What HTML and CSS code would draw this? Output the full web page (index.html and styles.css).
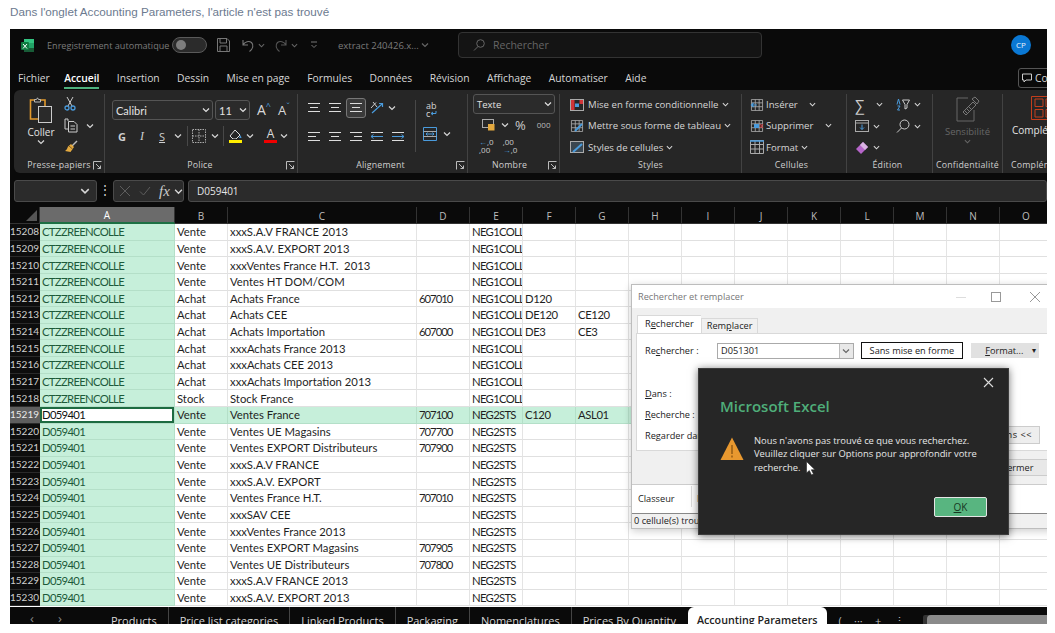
FILE: index.html
```html
<!DOCTYPE html>
<html lang="fr">
<head>
    <meta charset="UTF-8">
    <title>Accounting Parameters</title>
    <link rel="stylesheet" href="styles.css">
</head>
<body>
    <svg class="sprite" width="0" height="0">
        <symbol id="chev" viewBox="0 0 8 8"><path d="M1 2.5 4 5.5 7 2.5" fill="none" stroke="currentColor" stroke-width="1.2"/></symbol>
        <symbol id="launcher" viewBox="0 0 9 9"><path d="M.5 8.5V.5H8.5M3 3 7.5 7.5M7.5 4.5V7.5H4.5" fill="none" stroke="#bbb" stroke-width="1"/></symbol>
        <symbol id="lines" viewBox="0 0 14 12"><path d="M1 1.5H13M3 5.5H11M1 9.5H13" fill="none" stroke="#ddd" stroke-width="1.1"/></symbol>
        <symbol id="lines-l" viewBox="0 0 14 12"><path d="M1 1.5H13M1 5.5H9M1 9.5H13" fill="none" stroke="#ddd" stroke-width="1.1"/></symbol>
        <symbol id="lines-r" viewBox="0 0 14 12"><path d="M1 1.5H13M5 5.5H13M1 9.5H13" fill="none" stroke="#ddd" stroke-width="1.1"/></symbol>
        <symbol id="tbl" viewBox="0 0 14 14"><path d="M.5.5H13.5V13.5H.5ZM.5 4.5H13.5M.5 9H13.5M5 .5V13.5M9.5.5V13.5" fill="none" stroke="#aaa" stroke-width="1"/></symbol>
    </svg>

    <p class="caption">Dans l'onglet Accounting Parameters, l'article n'est pas trouvé</p>

    <div class="excel">
        <!-- barre de titre -->
        <div class="titlebar">
            <svg class="xl-icon" width="13" height="13" viewBox="0 0 13 13"><rect x="3" width="10" height="13" rx="1" fill="#21a366"/><rect x="3" width="10" height="4" fill="#33c481"/><rect x="3" y="9" width="10" height="4" fill="#185c37"/><rect y="3" width="8" height="8" rx="1" fill="#107c41"/><path d="M2 5 6 9.5M6 5 2 9.5" stroke="#fff" stroke-width="1"/></svg>
            <span class="autosave">Enregistrement automatique</span>
            <span class="toggle"></span>
            <svg class="save" width="13" height="14" viewBox="0 0 13 14"><path d="M.5.5H10L12.5 3V13.5H.5ZM3 .5V5H9.5V.5M3 13.5V8H10V13.5" fill="none" stroke="#777"/></svg>
            <svg class="undo" width="12" height="13" viewBox="0 0 12 13"><path d="M1 1V6H6M1 6C3 2.5 7 1.5 9.5 3.5 12 6 11 10 7.5 12.5" fill="none" stroke="#777" stroke-width="1.1"/></svg>
            <svg class="tb-chev" width="7" height="7"><use href="#chev"/></svg>
            <svg class="redo" width="12" height="13" viewBox="0 0 12 13"><path d="M11 1V6H6M11 6C9 2.5 5 1.5 2.5 3.5 0 6 1 10 4.5 12.5" fill="none" stroke="#555" stroke-width="1.1"/></svg>
            <svg class="tb-chev" width="7" height="7"><use href="#chev"/></svg>
            <svg class="custom" width="8" height="8" viewBox="0 0 8 8"><path d="M1 1H7M1.5 4 4 6.5 6.5 4" fill="none" stroke="#777"/></svg>
            <span class="filename">extract 240426.x...</span>
            <svg class="tb-chev name-chev" width="8" height="8"><use href="#chev"/></svg>
            <div class="search">
                <svg width="12" height="12" viewBox="0 0 12 12"><circle cx="7.5" cy="4.5" r="3.8" fill="none" stroke="#666"/><path d="M5 7.5 1 11.5" stroke="#666"/></svg>
                <span>Rechercher</span>
            </div>
            <span class="avatar">CP</span>
        </div>

        <!-- onglets du ruban -->
        <div class="tabs">
            <span>Fichier</span>
            <span class="on">Accueil</span>
            <span>Insertion</span>
            <span>Dessin</span>
            <span>Mise en page</span>
            <span>Formules</span>
            <span>Données</span>
            <span>Révision</span>
            <span>Affichage</span>
            <span>Automatiser</span>
            <span>Aide</span>
            <div class="comment">
                <svg width="10" height="10" viewBox="0 0 10 10"><path d="M.5 1H9.5V7H4L2 9V7H.5Z" fill="none" stroke="#ccc"/></svg>
                Commentaires
            </div>
        </div>

        <!-- ruban -->
        <div class="ribbon">
            <div class="group g-clip">
                <div class="g-body clip-body">
                    <div class="paste">
                        <svg width="24" height="27" viewBox="0 0 24 27"><path d="M6 3H1.5V22H9" fill="none" stroke="#e39a2d" stroke-width="1.6"/><path d="M11 3H16V9" fill="none" stroke="#e39a2d" stroke-width="1.6"/><path d="M5.5 5V2.5H7.5L8.5 .8 9.5 2.5H11.5V5Z" fill="none" stroke="#bbb"/><rect x="9.5" y="9.5" width="13" height="16" fill="#2a2a2a" stroke="#ccc"/></svg>
                        <span>Coller</span>
                        <svg width="8" height="8"><use href="#chev"/></svg>
                    </div>
                    <div class="clip-tools">
                        <svg width="12" height="15" viewBox="0 0 12 15"><path d="M3 1 8 10M9 1 4 10" stroke="#ccc" fill="none"/><circle cx="3" cy="12" r="2" fill="none" stroke="#4a9bdc" stroke-width="1.3"/><circle cx="9" cy="12" r="2" fill="none" stroke="#4a9bdc" stroke-width="1.3"/></svg>
                        <div class="copy-row">
                            <svg width="14" height="15" viewBox="0 0 14 15"><path d="M4 3V1H1V11H4" fill="none" stroke="#ccc"/><path d="M4.5 3.5H10L13 6.5V14H4.5ZM6.5 8H11M6.5 11H11" fill="none" stroke="#ccc"/></svg>
                            <svg class="copy-chev" width="8" height="8"><use href="#chev"/></svg>
                        </div>
                        <svg width="14" height="14" viewBox="0 0 14 14"><path d="M8 6 13 1" stroke="#bbb" stroke-width="1.5"/><path d="M7 4 10 7 6.5 12 1 11C3 10 3.5 7.5 4 6.5Z" fill="#e3a93f"/><path d="M5 6 8.5 9" stroke="#7a5a20"/></svg>
                    </div>
                </div>
                <div class="g-label">Presse-papiers</div>
                <svg class="launch" width="9" height="9"><use href="#launcher"/></svg>
            </div>

            <div class="group g-font">
                <div class="g-body stack">
                    <div class="f-row r1">
                        <div class="combo font-name"><span>Calibri</span><svg width="8" height="8"><use href="#chev"/></svg></div>
                        <div class="combo font-size"><span>11</span><svg width="8" height="8"><use href="#chev"/></svg></div>
                        <span class="grow-a">A<sup>^</sup></span>
                        <span class="shrink-a">A<sup>ˇ</sup></span>
                    </div>
                    <div class="f-row r2">
                        <b class="g-b">G</b>
                        <i class="g-i">I</i>
                        <u class="g-s">S</u>
                        <svg class="c1" width="8" height="8"><use href="#chev"/></svg>
                        <span class="vsep"></span>
                        <svg width="14" height="14" viewBox="0 0 14 14"><path d="M.5.5H13.5V13.5H.5ZM7 .5V13.5M.5 7H13.5" fill="none" stroke="#aaa" stroke-dasharray="1.5 1"/></svg>
                        <svg class="c2" width="8" height="8"><use href="#chev"/></svg>
                        <span class="vsep"></span>
                        <span class="swatch">
                            <svg width="13" height="10" viewBox="0 0 13 10"><path d="M6 1 11 6 7 10H4L1 7Z" fill="none" stroke="#ddd"/><path d="M11.5 6 12.5 9H10Z" fill="#4a9bdc"/></svg>
                            <em class="yellow"></em>
                        </span>
                        <svg class="c3" width="8" height="8"><use href="#chev"/></svg>
                        <span class="swatch text-a">A<em class="red"></em></span>
                        <svg class="c4" width="8" height="8"><use href="#chev"/></svg>
                    </div>
                </div>
                <div class="g-label">Police</div>
                <svg class="launch" width="9" height="9"><use href="#launcher"/></svg>
            </div>

            <div class="group g-align">
                <div class="g-body align-body">
                    <div class="stack align-left">
                        <div class="a-row a1">
                            <svg width="14" height="12"><use href="#lines"/></svg>
                            <svg width="14" height="12"><use href="#lines"/></svg>
                            <span class="pressed"><svg width="14" height="12"><use href="#lines"/></svg></span>
                            <svg width="14" height="14" viewBox="0 0 14 14"><path d="M2 12 12 3M9 2.5H12.5V6" fill="none" stroke="#4a9bdc" stroke-width="1.2"/><path d="M1 7 6 1.5M3 1 7 6" stroke="#ccc" fill="none"/></svg>
                            <svg class="a-chev" width="8" height="8"><use href="#chev"/></svg>
                        </div>
                        <div class="a-row a2">
                            <svg width="14" height="12"><use href="#lines-l"/></svg>
                            <svg width="14" height="12"><use href="#lines"/></svg>
                            <svg width="14" height="12"><use href="#lines-r"/></svg>
                            <svg width="14" height="12" viewBox="0 0 14 12"><path d="M1 1.5H13M1 9.5H13" stroke="#ddd"/><path d="M6 5.5H13M3.5 3.5 1 5.5 3.5 7.5M1 5.5H6" fill="none" stroke="#4a9bdc"/></svg>
                            <svg width="14" height="12" viewBox="0 0 14 12"><path d="M1 1.5H13M1 9.5H13" stroke="#ddd"/><path d="M1 5.5H13M10.5 3.5 13 5.5 10.5 7.5" fill="none" stroke="#4a9bdc"/></svg>
                        </div>
                    </div>
                    <span class="vsep tall"></span>
                    <div class="stack wrap-col">
                        <div class="wrap-text">ab<br>c<svg width="7" height="7" viewBox="0 0 7 7"><path d="M6 1V3.5H1.5M3 2 1 3.5 3 5" fill="none" stroke="#4a9bdc"/></svg></div>
                        <div class="merge-row">
                            <svg width="14" height="14" viewBox="0 0 14 14"><path d="M.5.5H13.5V13.5H.5Z" fill="none" stroke="#4a9bdc"/><path d="M.5 4.5H13.5M.5 9.5H13.5" stroke="#aaa"/><path d="M3 7H11M4.5 5.5 3 7 4.5 8.5M9.5 5.5 11 7 9.5 8.5" fill="none" stroke="#4a9bdc"/></svg>
                            <svg width="8" height="8"><use href="#chev"/></svg>
                        </div>
                    </div>
                </div>
                <div class="g-label">Alignement</div>
                <svg class="launch" width="9" height="9"><use href="#launcher"/></svg>
            </div>

            <div class="group g-num">
                <div class="g-body stack num-body">
                    <div class="combo num-format"><span>Texte</span><svg width="8" height="8"><use href="#chev"/></svg></div>
                    <div class="n-row">
                        <svg width="13" height="12" viewBox="0 0 13 12"><rect x=".5" y=".5" width="11" height="8" fill="none" stroke="#aaa"/><rect x="6" y="5" width="6.5" height="6.5" fill="#e3a93f"/></svg>
                        <svg class="n-chev" width="8" height="8"><use href="#chev"/></svg>
                        <span class="pct">%</span>
                        <span class="thou">000</span>
                    </div>
                    <div class="n-row dec">
                        <span class="dec-a"><em>←</em>,0<br>,00</span>
                        <span class="dec-b">,00<br><em>→</em>,0</span>
                    </div>
                </div>
                <div class="g-label">Nombre</div>
                <svg class="launch" width="9" height="9"><use href="#launcher"/></svg>
            </div>

            <div class="group g-styles">
                <div class="g-body stack list-body">
                    <div class="li">
                        <svg width="14" height="12" viewBox="0 0 14 12"><rect x=".5" y=".5" width="13" height="11" fill="none" stroke="#aaa"/><rect x="1" y="1" width="3.5" height="10" fill="#d13438"/><rect x="9.5" y="1" width="3.5" height="4" fill="#d13438"/><rect x="5" y="4.5" width="4" height="3.5" fill="#4a9bdc"/></svg>
                        <span>Mise en forme conditionnelle</span><svg width="7" height="7"><use href="#chev"/></svg>
                    </div>
                    <div class="li">
                        <svg width="14" height="12" viewBox="0 0 14 12"><use href="#tbl"/><path d="M5 11 12 4" stroke="#4a9bdc" stroke-width="2"/></svg>
                        <span>Mettre sous forme de tableau</span><svg width="7" height="7"><use href="#chev"/></svg>
                    </div>
                    <div class="li">
                        <svg width="14" height="12" viewBox="0 0 14 12"><rect x=".5" y=".5" width="13" height="11" fill="#3a4650" stroke="#aaa"/><path d="M3 11 12 3" stroke="#4a9bdc" stroke-width="2"/></svg>
                        <span>Styles de cellules</span><svg width="7" height="7"><use href="#chev"/></svg>
                    </div>
                </div>
                <div class="g-label">Styles</div>
            </div>

            <div class="group g-cells">
                <div class="g-body stack list-body">
                    <div class="li">
                        <svg width="14" height="12" viewBox="0 0 14 12"><use href="#tbl"/><path d="M1 6H7M3.5 4 1.5 6 3.5 8" fill="none" stroke="#4a9bdc" stroke-width="1.2"/></svg>
                        <span class="w-ins">Insérer</span><svg width="7" height="7"><use href="#chev"/></svg>
                    </div>
                    <div class="li">
                        <svg width="14" height="12" viewBox="0 0 14 12"><use href="#tbl"/><rect x="4" y="4" width="5" height="4" fill="#4a9bdc"/><path d="M10 4 13 8M13 4 10 8" stroke="#d13438"/></svg>
                        <span class="w-sup">Supprimer</span><svg width="7" height="7"><use href="#chev"/></svg>
                    </div>
                    <div class="li">
                        <svg width="14" height="14" viewBox="0 0 14 14"><use href="#tbl"/><path d="M0 1H14" stroke="#4a9bdc" stroke-width="1.5"/></svg>
                        <span>Format</span><svg width="7" height="7"><use href="#chev"/></svg>
                    </div>
                </div>
                <div class="g-label">Cellules</div>
            </div>

            <div class="group g-edit">
                <div class="g-body edit-body">
                    <span class="sigma">∑</span>
                    <svg class="e-c1" width="7" height="7"><use href="#chev"/></svg>
                    <svg width="14" height="13" viewBox="0 0 14 13"><path d="M1 6.5L2.5 1 4 6.5M1.5 8H4L1.5 12H4" fill="none" stroke="#4a9bdc"/><path d="M6.5 2H13.5L11 6.5V10L9 11V6.5Z" fill="none" stroke="#ccc"/></svg>
                    <svg width="7" height="7"><use href="#chev"/></svg>
                    <svg width="14" height="12" viewBox="0 0 14 12"><rect x=".5" y=".5" width="13" height="11" fill="none" stroke="#aaa"/><path d="M.5 3H13.5" stroke="#aaa"/><path d="M7 4.5V9.5M5 7.5 7 9.5 9 7.5" fill="none" stroke="#4a9bdc"/></svg>
                    <svg width="7" height="7"><use href="#chev"/></svg>
                    <svg width="14" height="14" viewBox="0 0 14 14"><circle cx="8.5" cy="5.5" r="4.5" fill="none" stroke="#ccc"/><path d="M5.5 9 1 13.5" stroke="#ccc"/></svg>
                    <svg width="7" height="7"><use href="#chev"/></svg>
                    <svg width="14" height="14" viewBox="0 0 14 14"><path d="M8 1 13 6 6 13 1 8Z" fill="#b565c9"/><path d="M8 1 13 6 10 9 5 4Z" fill="#d9b3e3"/></svg>
                    <svg width="7" height="7"><use href="#chev"/></svg>
                </div>
                <div class="g-label">Édition</div>
            </div>

            <div class="group g-conf">
                <div class="g-body big-body">
                    <svg width="24" height="26" viewBox="0 0 24 26"><path d="M1 2H12M1 2V25H18V14" fill="none" stroke="#666"/><path d="M7 16 17 6 20 9 10 19Z" fill="none" stroke="#777"/><path d="M16 3 19 1 23 5 21 8Z" fill="none" stroke="#777"/><path d="M9 15 12 18M11 13 14 16M13 11 16 14" stroke="#777"/></svg>
                    <span class="dim">Sensibilité</span>
                    <svg class="dim" width="7" height="7"><use href="#chev"/></svg>
                </div>
                <div class="g-label">Confidentialité</div>
            </div>

            <div class="group g-comp">
                <div class="g-body big-body">
                    <svg width="26" height="24" viewBox="0 0 26 24"><path d="M.5.5H25.5V23.5H.5ZM4 3H12V10.5H4ZM15 3H23V10.5H15ZM4 13.5H12V21H4ZM15 13.5H23V21H15Z" fill="none" stroke="#c43e1c"/></svg>
                    <span>Compléments</span>
                </div>
                <div class="g-label">Compléments</div>
            </div>
        </div>

        <!-- barre de formule -->
        <div class="formula">
            <div class="namebox"><svg width="10" height="10"><use href="#chev"/></svg></div>
            <span class="dots">⋮</span>
            <div class="fx-box">
                <svg width="12" height="12" viewBox="0 0 12 12"><path d="M1 1 11 11M11 1 1 11" stroke="#5d5d5d"/></svg>
                <svg width="12" height="12" viewBox="0 0 12 12"><path d="M1 6.5 4.5 10 11 2" fill="none" stroke="#5d5d5d"/></svg>
                <i>fx</i>
                <svg width="9" height="9"><use href="#chev"/></svg>
            </div>
            <div class="fx-input">D059401</div>
        </div>

        <!-- feuille -->
        <div class="sheet">
            <table>
                <colgroup>
                    <col class="c-head"><col class="c-a"><col class="c-b"><col class="c-c"><col class="c-s"><col class="c-s"><col class="c-s"><col class="c-s">
                    <col class="c-s"><col class="c-s"><col class="c-s"><col class="c-s"><col class="c-s"><col class="c-s"><col class="c-s"><col class="c-s">
                </colgroup>
                <thead>
                    <tr><th class="corner"></th><th class="col-on">A</th><th>B</th><th>C</th><th>D</th><th>E</th><th>F</th><th>G</th><th>H</th><th>I</th><th>J</th><th>K</th><th>L</th><th>M</th><th>N</th><th>O</th></tr>
                </thead>
                <tbody>
                    <tr><th>15208</th><td>CTZZREENCOLLE</td><td>Vente</td><td>xxxS.A.V FRANCE 2013</td><td></td><td>NEG1COLL</td><td></td><td></td><td></td><td></td><td></td><td></td><td></td><td></td><td></td><td></td></tr>
                    <tr><th>15209</th><td>CTZZREENCOLLE</td><td>Vente</td><td>xxxS.A.V. EXPORT 2013</td><td></td><td>NEG1COLL</td><td></td><td></td><td></td><td></td><td></td><td></td><td></td><td></td><td></td><td></td></tr>
                    <tr><th>15210</th><td>CTZZREENCOLLE</td><td>Vente</td><td>xxxVentes France H.T.&nbsp; 2013</td><td></td><td>NEG1COLL</td><td></td><td></td><td></td><td></td><td></td><td></td><td></td><td></td><td></td><td></td></tr>
                    <tr><th>15211</th><td>CTZZREENCOLLE</td><td>Vente</td><td>Ventes HT DOM/COM</td><td></td><td>NEG1COLL</td><td></td><td></td><td></td><td></td><td></td><td></td><td></td><td></td><td></td><td></td></tr>
                    <tr><th>15212</th><td>CTZZREENCOLLE</td><td>Achat</td><td>Achats France</td><td>607010</td><td>NEG1COLL</td><td>D120</td><td></td><td></td><td></td><td></td><td></td><td></td><td></td><td></td><td></td></tr>
                    <tr><th>15213</th><td>CTZZREENCOLLE</td><td>Achat</td><td>Achats CEE</td><td></td><td>NEG1COLL</td><td>DE120</td><td>CE120</td><td></td><td></td><td></td><td></td><td></td><td></td><td></td><td></td></tr>
                    <tr><th>15214</th><td>CTZZREENCOLLE</td><td>Achat</td><td>Achats Importation</td><td>607000</td><td>NEG1COLL</td><td>DE3</td><td>CE3</td><td></td><td></td><td></td><td></td><td></td><td></td><td></td><td></td></tr>
                    <tr><th>15215</th><td>CTZZREENCOLLE</td><td>Achat</td><td>xxxAchats France 2013</td><td></td><td>NEG1COLL</td><td></td><td></td><td></td><td></td><td></td><td></td><td></td><td></td><td></td><td></td></tr>
                    <tr><th>15216</th><td>CTZZREENCOLLE</td><td>Achat</td><td>xxxAchats CEE 2013</td><td></td><td>NEG1COLL</td><td></td><td></td><td></td><td></td><td></td><td></td><td></td><td></td><td></td><td></td></tr>
                    <tr><th>15217</th><td>CTZZREENCOLLE</td><td>Achat</td><td>xxxAchats Importation 2013</td><td></td><td>NEG1COLL</td><td></td><td></td><td></td><td></td><td></td><td></td><td></td><td></td><td></td><td></td></tr>
                    <tr><th>15218</th><td>CTZZREENCOLLE</td><td>Stock</td><td>Stock France</td><td></td><td>NEG1COLL</td><td></td><td></td><td></td><td></td><td></td><td></td><td></td><td></td><td></td><td></td></tr>
                    <tr class="row-on"><th>15219</th><td class="active">D059401</td><td>Vente</td><td>Ventes France</td><td>707100</td><td>NEG2STS</td><td>C120</td><td>ASL01</td><td></td><td></td><td></td><td></td><td></td><td></td><td></td><td></td></tr>
                    <tr><th>15220</th><td>D059401</td><td>Vente</td><td>Ventes UE Magasins</td><td>707700</td><td>NEG2STS</td><td></td><td></td><td></td><td></td><td></td><td></td><td></td><td></td><td></td><td></td></tr>
                    <tr><th>15221</th><td>D059401</td><td>Vente</td><td>Ventes EXPORT Distributeurs</td><td>707900</td><td>NEG2STS</td><td></td><td></td><td></td><td></td><td></td><td></td><td></td><td></td><td></td><td></td></tr>
                    <tr><th>15222</th><td>D059401</td><td>Vente</td><td>xxxS.A.V FRANCE</td><td></td><td>NEG2STS</td><td></td><td></td><td></td><td></td><td></td><td></td><td></td><td></td><td></td><td></td></tr>
                    <tr><th>15223</th><td>D059401</td><td>Vente</td><td>xxxS.A.V. EXPORT</td><td></td><td>NEG2STS</td><td></td><td></td><td></td><td></td><td></td><td></td><td></td><td></td><td></td><td></td></tr>
                    <tr><th>15224</th><td>D059401</td><td>Vente</td><td>Ventes France H.T.</td><td>707010</td><td>NEG2STS</td><td></td><td></td><td></td><td></td><td></td><td></td><td></td><td></td><td></td><td></td></tr>
                    <tr><th>15225</th><td>D059401</td><td>Vente</td><td>xxxSAV CEE</td><td></td><td>NEG2STS</td><td></td><td></td><td></td><td></td><td></td><td></td><td></td><td></td><td></td><td></td></tr>
                    <tr><th>15226</th><td>D059401</td><td>Vente</td><td>xxxVentes France 2013</td><td></td><td>NEG2STS</td><td></td><td></td><td></td><td></td><td></td><td></td><td></td><td></td><td></td><td></td></tr>
                    <tr><th>15227</th><td>D059401</td><td>Vente</td><td>Ventes EXPORT Magasins</td><td>707905</td><td>NEG2STS</td><td></td><td></td><td></td><td></td><td></td><td></td><td></td><td></td><td></td><td></td></tr>
                    <tr><th>15228</th><td>D059401</td><td>Vente</td><td>Ventes UE Distributeurs</td><td>707800</td><td>NEG2STS</td><td></td><td></td><td></td><td></td><td></td><td></td><td></td><td></td><td></td><td></td></tr>
                    <tr><th>15229</th><td>D059401</td><td>Vente</td><td>xxxS.A.V FRANCE 2013</td><td></td><td>NEG2STS</td><td></td><td></td><td></td><td></td><td></td><td></td><td></td><td></td><td></td><td></td></tr>
                    <tr><th>15230</th><td>D059401</td><td>Vente</td><td>xxxS.A.V. EXPORT 2013</td><td></td><td>NEG2STS</td><td></td><td></td><td></td><td></td><td></td><td></td><td></td><td></td><td></td><td></td></tr>
                </tbody>
            </table>
        </div>

        <!-- onglets de feuilles -->
        <div class="sheet-tabs">
            <span class="nav">‹</span>
            <span class="nav nav2">›</span>
            <span class="st">Products</span>
            <span class="st">Price list categories</span>
            <span class="st">Linked Products</span>
            <span class="st">Packaging</span>
            <span class="st">Nomenclatures</span>
            <span class="st last">Prices By Quantity</span>
            <span class="st-on">Accounting Parameters</span>
            <span class="st-more"><span>(</span><span>···</span><span>+</span><span>⋮</span></span>
            <span class="hscroll"><em></em></span>
        </div>

        <!-- boite rechercher et remplacer -->
        <div class="find-dialog">
            <div class="fd-title">
                <span>Rechercher et remplacer</span>
                <svg class="fd-min" width="10" height="10" viewBox="0 0 10 10"><path d="M0 5.5H10" stroke="#ddd"/></svg>
                <svg class="fd-max" width="10" height="10" viewBox="0 0 10 10"><rect x=".5" y=".5" width="9" height="9" fill="none" stroke="#999"/></svg>
                <svg class="fd-close" width="10" height="10" viewBox="0 0 10 10"><path d="M0 0 10 10M10 0 0 10" stroke="#999"/></svg>
            </div>
            <div class="fd-tabs">
                <span class="fd-tab on">R<u>e</u>chercher</span>
                <span class="fd-tab">Rem<u>p</u>lacer</span>
            </div>
            <div class="fd-panel">
                <div class="fd-row first">
                    <label>Re<u>c</u>hercher :</label>
                    <div class="fd-input"><span>D051301</span><b><svg width="8" height="8"><use href="#chev"/></svg></b></div>
                    <span class="fd-noformat">Sans mise en forme</span>
                    <span class="fd-format"><span><u>F</u>ormat...</span><small>▾</small></span>
                </div>
                <div class="fd-row dans"><label><u>D</u>ans :</label></div>
                <div class="fd-row"><label><u>R</u>echerche :</label></div>
                <div class="fd-row last"><label>Re<u>g</u>arder dans :</label><span class="fd-options">Options &lt;&lt;</span></div>
            </div>
            <div class="fd-actions"><span class="fd-closebtn">Fermer</span></div>
            <div class="fd-results"><span class="fd-col">Classeur</span><span class="fd-col2">Feuille</span></div>
            <div class="fd-status">0 cellule(s) trouvée(s)</div>
        </div>

        <!-- message d'erreur -->
        <div class="msgbox">
            <svg class="msg-close" width="11" height="11" viewBox="0 0 11 11"><path d="M1 1 10 10M10 1 1 10" stroke="#ddd" stroke-width="1.1"/></svg>
            <h2>Microsoft Excel</h2>
            <div class="msg-body">
                <svg width="24" height="24" viewBox="0 0 24 24"><path d="M12 .5 23.5 23H.5Z" fill="#e8982f"/><path d="M12 8V17M12 18.5V20.5" stroke="#6b3f08" stroke-width="1"/></svg>
                <p>Nous n'avons pas trouvé ce que vous recherchez.<br>Veuillez cliquer sur Options pour approfondir votre<br>recherche.</p>
            </div>
            <div class="msg-actions"><span class="msg-ok"><u>O</u>K</span></div>
            <svg class="pointer" width="10" height="15" viewBox="0 0 10 15"><path d="M.5.5V12L3.3 9.5 5.5 14 7.5 13 5.3 8.8H9Z" fill="#fff" stroke="#222" stroke-width=".6"/></svg>
        </div>
    </div>
</body>
</html>
```

FILE: styles.css
```css
* {
    margin: 0;
    padding: 0;
    box-sizing: border-box;
}

html, body {
    height: 633px;
    overflow: hidden;
    background: #fff;
}

body {
    font-family: "Open Sans", "Noto Sans", sans-serif;
}

svg {
    display: block;
    flex: none;
}

.sprite {
    position: absolute;
}

.caption {
    height: 29px;
    padding: 5px 0 0 10px;
    font: 11.7px/14px "Liberation Sans", Arial, sans-serif;
    color: #6c7a8f;
}

.excel {
    position: relative;
    display: flex;
    flex-direction: column;
    width: 1037px;
    height: 595px;
    margin-left: 10px;
    overflow: hidden;
    background: #0a0a0a;
    color: #d6d6d6;
    font-size: 10px;
}

/* title bar */
.titlebar {
    display: flex;
    align-items: center;
    height: 32px;
    padding-left: 11px;
    color: #7b7b7b;
}

.autosave {
    width: 119px;
    margin-left: 13px;
    font-size: 9.1px;
    white-space: nowrap;
}

.toggle {
    width: 35px;
    height: 16px;
    margin-left: 6px;
    border: 1px solid #5a5a5a;
    border-radius: 8px;
    background: #2b2b2b;
}

.toggle::before {
    content: "";
    display: block;
    width: 10px;
    height: 10px;
    margin: 2px 0 0 3px;
    border-radius: 50%;
    background: #7d7d7d;
}

.save { margin-left: 10px; }
.undo { margin-left: 12px; }
.redo { margin-left: 10px; }
.tb-chev { margin-left: 4px; color: #666; }
.custom { margin-left: 12px; }

.filename {
    width: 78px;
    margin-left: 20px;
    font-size: 9.5px;
    white-space: nowrap;
}

.name-chev { margin-left: 5px; }

.search {
    display: flex;
    align-items: center;
    gap: 8px;
    width: 304px;
    height: 26px;
    margin-left: 29px;
    padding-left: 14px;
    border: 1px solid #333;
    border-radius: 4px;
    background: #141414;
    color: #666;
    font-size: 10.5px;
}

.avatar {
    width: 20px;
    height: 20px;
    margin-left: 249px;
    border-radius: 50%;
    background: #0a78d4;
    color: #eaf4fb;
    font-size: 8px;
    line-height: 20px;
    text-align: center;
}

/* ribbon tabs */
.tabs {
    display: flex;
    align-items: flex-start;
    gap: 17.4px;
    height: 29px;
    padding: 9px 0 0 8px;
    font-size: 10.3px;
    line-height: 16px;
    white-space: nowrap;
}

.tabs .on {
    height: 19px;
    margin-left: -3px;
    border-bottom: 2px solid #4eb07d;
    color: #fff;
    font-weight: 600;
}

.comment {
    display: flex;
    align-items: center;
    gap: 3px;
    position: absolute;
    left: 1008px;
    top: 39px;
    width: 80px;
    height: 20px;
    padding-left: 3px;
    border: 1px solid #555;
    border-radius: 3px;
}

/* ribbon */
.ribbon {
    display: flex;
    flex: none;
    width: 1037px;
    height: 83px;
    margin-left: 4px;
    padding-top: 4px;
    border-radius: 6px 0 0 6px;
    background: #262626;
    overflow: hidden;
}

.group {
    position: relative;
    display: flex;
    flex: none;
    flex-direction: column;
    height: 79px;
    padding-bottom: 1px;
    border-right: 1px solid #424242;
}

.g-body {
    flex: 1;
    min-height: 0;
}

.g-label {
    height: 14px;
    font-size: 8.8px;
    line-height: 14px;
    letter-spacing: .2px;
    text-align: center;
    white-space: nowrap;
    color: #cfcfcf;
}

.launch {
    position: absolute;
    right: 2px;
    bottom: 3px;
}

.stack {
    display: flex;
    flex-direction: column;
}

.g-clip { width: 91px; }
.g-font { width: 193px; }
.g-align { width: 170px; }
.g-num { width: 92px; }
.g-styles { width: 182px; }
.g-cells { width: 105px; }
.g-edit { width: 86px; }
.g-conf { width: 70px; }
.g-comp { width: 60px; border: 0; }

.g-align .g-label { padding-right: 4px; }
.g-num .g-label { padding-right: 8px; }
.g-font .g-label { padding-right: 2px; }
.g-cells .g-label { padding-right: 5px; }
.g-edit .g-label { padding-right: 4px; }

.clip-body {
    display: flex;
    padding-left: 11px;
}

.paste {
    display: flex;
    flex-direction: column;
    align-items: center;
    width: 32px;
    padding-top: 3px;
    font-size: 10px;
}

.paste span {
    margin-top: 1px;
    line-height: 14px;
    color: #e4e4e4;
}

.paste > svg:last-child { margin-top: -1px; }

.clip-tools {
    display: flex;
    flex-direction: column;
    align-items: flex-start;
    gap: 7px;
    padding: 2px 0 0 7px;
}

.copy-row {
    display: flex;
    align-items: center;
}

.copy-chev { margin-left: 8px; }

/* police */
.g-font .stack {
    gap: 4px;
    padding: 6px 0 0 7px;
}

.f-row, .a-row, .n-row {
    display: flex;
    align-items: center;
}

.f-row.r1 { height: 20px; gap: 2px; }

.combo {
    display: flex;
    align-items: center;
    justify-content: space-between;
    height: 20px;
    padding: 0 2px 0 3px;
    border: 1px solid #555;
    border-radius: 3px;
    background: #2b2b2b;
    font-family: Lato, sans-serif;
    font-size: 11px;
    color: #e2e2e2;
}

.font-name { width: 101px; }
.font-size { width: 35px; }

.grow-a, .shrink-a {
    font-size: 14px;
    line-height: 20px;
    color: #d8d8d8;
}

.grow-a { width: 17px; margin-left: 5px; }
.shrink-a { width: 14px; margin-left: 2px; font-size: 13px; }

.grow-a sup, .shrink-a sup {
    font-size: 9px;
    line-height: 0;
    color: #4a9bdc;
}

.f-row.r2 {
    height: 24px;
    padding-left: 6px;
}

.g-b, .g-i, .g-s {
    width: 21px;
    font-size: 11px;
    color: #cfcfcf;
}

.g-b { width: 22px; }
.g-i { width: 19px; font-family: "Liberation Serif", serif; font-size: 12px; }
.g-s { width: 15px; text-decoration-thickness: 1px; }
.c1 { margin-right: 5px; }

.vsep {
    flex: none;
    width: 1px;
    height: 20px;
    background: #484848;
}

.f-row.r2 .vsep + svg { margin-left: 4px; }
.c2 { margin: 0 4px 0 5px; }

.swatch {
    display: block;
    width: 13px;
    margin-left: 5px;
    line-height: 10px;
}

.swatch em {
    display: block;
    height: 3px;
    margin-top: 1px;
    width: 13px;
}

.yellow { background: #ffee00; }
.red { background: #f00000; }
.c3 { margin: 0 5px 0 4px; }
.text-a { font-size: 12px; text-align: center; color: #ddd; }
.c4 { margin-left: 3px; }

/* alignement */
.align-body {
    display: flex;
    padding-left: 9px;
}

.align-left {
    gap: 9px;
    width: 108px;
    padding-top: 4px;
}

.a-row { gap: 7px; height: 20px; }

.pressed {
    display: flex;
    align-items: center;
    justify-content: center;
    width: 20px;
    height: 20px;
    margin: 0 -3px;
    border: 1px solid #777;
    border-radius: 3px;
    background: #3a3a3a;
}

.a-chev { margin-left: -3px; }

.vsep.tall {
    height: 52px;
    margin-top: 6px;
}

.wrap-col {
    padding: 5px 0 0 10px;
}

.wrap-text {
    height: 24px;
    font-size: 9px;
    line-height: 8px;
    padding-top: 3px;
}

.wrap-text svg {
    display: inline;
}

.merge-row {
    display: flex;
    align-items: center;
    gap: 6px;
    margin: 4px 0 0 -3px;
}

/* nombre */
.num-body {
    padding: 0 0 0 5px;
}

.num-format {
    width: 82px;
    height: 20px;
    flex: none;
    font-family: "Open Sans", sans-serif;
    font-size: 9.5px;
}

.n-row {
    height: 21px;
    padding-left: 9px;
}

.n-chev { margin-left: 6px; }
.pct { margin-left: 6px; font-size: 13px; color: #ccc; }
.thou { margin-left: 11px; font-size: 8px; color: #bbb; }

.n-row.dec {
    gap: 9px;
    padding-left: 6px;
    font-size: 8px;
    line-height: 7.5px;
    color: #ccc;
}

.dec em {
    font-style: normal;
    color: #4a9bdc;
}

/* listes styles / cellules */
.list-body {
    padding: 0 0 0 10px;
}

.li {
    display: flex;
    align-items: center;
    gap: 3px;
    height: 21.5px;
    font-size: 9.6px;
    white-space: nowrap;
}

.li span { margin-left: 1px; }
.g-cells .list-body { padding-left: 8px; }
.g-cells .li { gap: 1px; }
.g-cells .li svg:last-child { margin-left: 2px; }
.w-ins { width: 40px; }
.w-sup { width: 56px; }

/* edition */
.edit-body {
    display: grid;
    grid-template-columns: 14px 19px 14px 8px;
    grid-auto-rows: 21.5px;
    align-items: center;
    padding: 0 0 0 8px;
    column-gap: 4px;
}

.sigma { font-size: 15px; line-height: 14px; color: #ccc; }
.e-c1 { margin-left: 3px; }

/* confidentialite, complements */
.big-body {
    display: flex;
    flex-direction: column;
    align-items: center;
    padding-top: 2px;
}

.big-body span {
    margin-top: 3px;
    white-space: nowrap;
}

.dim {
    color: #666;
    font-size: 9.5px;
}

.g-comp .big-body { align-items: flex-start; padding-left: 9px; }
.g-comp .big-body svg { margin-left: 19px; }
.g-comp .big-body span { color: #e4e4e4; }
.g-comp .g-label { text-align: left; padding-left: 8px; }

/* formula bar */
.formula {
    display: flex;
    flex: none;
    align-items: stretch;
    height: 22px;
    margin: 7px 0 5px 4px;
}

.namebox, .fx-box, .fx-input {
    border: 1px solid #4a4a4a;
    border-radius: 3px;
    background: #2b2b2b;
}

.namebox {
    display: flex;
    align-items: center;
    justify-content: flex-end;
    width: 83px;
    padding-right: 6px;
}

.dots {
    width: 16px;
    text-align: center;
    font-size: 12px;
    line-height: 20px;
}

.fx-box {
    display: flex;
    align-items: center;
    gap: 8px;
    width: 71px;
    padding-left: 5px;
}

.fx-box i {
    font-family: "Liberation Serif", serif;
    font-size: 15px;
    color: #ccc;
}

.fx-box svg:last-child { margin-left: -4px; }

.fx-input {
    flex: 1;
    margin-left: 4px;
    padding-left: 8px;
    font-size: 10px;
    line-height: 20px;
    color: #e6e6e6;
}

/* sheet */
.sheet {
    flex: 1;
    min-height: 0;
    overflow: hidden;
    background: #fff;
}

table {
    width: 1043px;
    table-layout: fixed;
    border-collapse: separate;
    border-spacing: 0;
    font-family: Lato, sans-serif;
    font-size: 11.3px;
    color: #1f1f1f;
}

.c-head { width: 30px; }
.c-a { width: 135px; }
.c-b { width: 53px; }
.c-c { width: 189px; }
.c-s { width: 53px; }

tr {
    height: 16.636px;
}

thead tr {
    height: 17px;
}

thead th {
    padding-top: 1px;
    border-right: 1px solid #333;
    border-bottom: 1px solid #333;
    background: #0a0a0a;
    color: #bdbdbd;
    font-family: "Open Sans", sans-serif;
    font-size: 10px;
    font-weight: 400;
    line-height: 14px;
}

thead th.col-on {
    border-bottom: 2px solid #1d7044;
    background: #6b6b6b;
    color: #fff;
}

th.corner {
    position: relative;
}

th.corner::after {
    content: "";
    position: absolute;
    right: 2px;
    bottom: 2px;
    border-style: solid;
    border-width: 0 0 11px 11px;
    border-color: transparent transparent #555 transparent;
}

tbody th {
    padding: 0 1px 0 0;
    border-bottom: 1px solid #2a2a2a;
    background: #0d0d0d;
    color: #cfcfcf;
    font-size: 10px;
    font-weight: 400;
    line-height: 15px;
    text-align: right;
}

tbody td {
    padding: 0 0 0 2px;
    overflow: hidden;
    border-right: 1px solid #e4e4e4;
    border-bottom: 1px solid #e0e0e0;
    line-height: 15px;
    white-space: nowrap;
}

tbody td:nth-child(2) {
    border-right: 1px solid #b4dfc8;
    border-bottom-color: #b4dfc8;
    background: #c6efda;
    color: #1d5a3a;
    letter-spacing: -.7px;
}

tbody td:nth-child(5) { letter-spacing: -1px; }
tbody td:nth-child(6) { letter-spacing: -.7px; }
tbody td:nth-child(7), tbody td:nth-child(8) { letter-spacing: -.4px; }

tr.row-on th {
    background: #5e5e5e;
    color: #e8e8e8;
}

tr.row-on td {
    background: #c6efda;
    border-color: #b4dfc8;
}

tbody tr.row-on td.active {
    background: #fff;
    color: #111;
    box-shadow: inset 0 0 0 2px #1d6b41;
}

/* sheet tabs */
.sheet-tabs {
    display: flex;
    flex: none;
    align-items: flex-start;
    height: 17px;
    overflow: hidden;
    background: #0a0a0a;
    font-size: 11px;
    line-height: 16px;
    white-space: nowrap;
}

.nav {
    width: 28px;
    margin-left: 20px;
    padding-top: 3px;
    font-size: 13px;
    color: #888;
}

.nav2 {
    width: 20px;
    margin-left: 0;
    margin-right: 22px;
}

.st {
    padding: 6px 11px 0;
    border-right: 1px solid #444;
    color: #d8d8d8;
}

.st.last { border: 0; padding-right: 12px; }

.st-on {
    height: 17px;
    padding: 5px 9px 0;
    border-radius: 6px 6px 0 0;
    background: #fff;
    color: #222;
    font-weight: 600;
    font-size: 10.7px;
}

.st-more {
    display: flex;
    justify-content: space-between;
    width: 96px;
    padding: 6px 18px 0 12px;
    color: #bbb;
}

.hscroll {
    flex: 1;
    margin-top: 8px;
    height: 9px;
    padding-left: 4px;
    border-radius: 2px 0 0 0;
    background: #333;
}

.hscroll em {
    display: block;
    height: 9px;
    border-radius: 4px 0 0 0;
    background: #8a8a8a;
}

/* find dialog, sits over the sheet */
.find-dialog {
    position: absolute;
    left: 621px;
    top: 255px;
    width: 430px;
    height: 245px;
    border: 1px solid #bdbdbd;
    background: #f0f0f0;
    box-shadow: 0 2px 8px rgba(0, 0, 0, .2);
    color: #222;
    font-size: 9.2px;
}

.fd-title {
    display: flex;
    align-items: center;
    height: 23px;
    padding-left: 6px;
    background: #fff;
    color: #777;
}

.fd-min { margin-left: 212px; }
.fd-max { margin-left: 25px; }
.fd-close { margin-left: 29px; }

.fd-tabs {
    display: flex;
    align-items: flex-end;
    height: 25px;
    padding-left: 5px;
}

.fd-tab {
    height: 15px;
    padding: 0 5px;
    border: 1px solid #d9d9d9;
    border-bottom: 0;
    line-height: 14px;
    background: #f0f0f0;
}

.fd-tab.on {
    height: 18px;
    padding: 1px 7px 0;
    border-right: 0;
    background: #fff;
}

.fd-panel {
    width: 412px;
    height: 118px;
    margin-left: 4px;
    padding: 8px 8px 0;
    border: 1px solid #d9d9d9;
    background: #fff;
}

.fd-row {
    display: flex;
    align-items: center;
    height: 16px;
    margin-bottom: 5px;
}

.fd-row label {
    flex: none;
    width: 72px;
    white-space: nowrap;
}

.fd-row.first { height: 17px; }
.fd-row.dans { margin-top: 26px; }

.fd-input {
    display: flex;
    align-items: center;
    justify-content: space-between;
    width: 137px;
    height: 16px;
    padding-left: 3px;
    border: 1px solid #aaa;
}

.fd-input b {
    display: flex;
    align-items: center;
    justify-content: center;
    width: 14px;
    height: 14px;
    border-left: 1px solid #bbb;
    background: #e8e8e8;
    color: #666;
}

.fd-noformat {
    width: 103px;
    height: 17px;
    margin-left: 7px;
    border: 1px solid #111;
    text-align: center;
    line-height: 15px;
}

.fd-format {
    display: flex;
    justify-content: space-between;
    width: 68px;
    height: 15px;
    margin-left: 8px;
    padding: 0 3px 0 14px;
    background: #e1e1e1;
    line-height: 15px;
}

.fd-options {
    width: 80px;
    height: 18px;
    margin-left: auto;
    margin-right: -1px;
    padding-right: 7px;
    border: 1px solid #ccc;
    background: #eee;
    line-height: 16px;
    text-align: right;
    letter-spacing: .5px;
}

.fd-actions {
    display: flex;
    justify-content: flex-end;
    height: 33px;
    padding: 8px 2px 0 0;
}

.fd-closebtn {
    width: 80px;
    height: 17px;
    border: 1px solid #ccc;
    background: #e8e8e8;
    line-height: 15px;
    text-align: center;
}

.fd-results {
    display: flex;
    height: 29px;
    border-top: 1px solid #ccc;
    background: #fff;
    line-height: 27px;
    padding-left: 6px;
}

.fd-col {
    width: 53px;
}

.fd-col2 {
    height: 21px;
    margin-top: 1px;
    padding-left: 5px;
    border-left: 1px solid #ddd;
    line-height: 25px;
}

.fd-status {
    height: 15px;
    padding-left: 2px;
    border-top: 1px solid #888;
    background: #f0f0f0;
    line-height: 13px;
}

/* message box, over the find dialog */
.msgbox {
    position: absolute;
    left: 688px;
    top: 339px;
    width: 311px;
    height: 167px;
    padding: 28px 21px 0;
    background: #262626;
    box-shadow: 0 1px 8px rgba(0, 0, 0, .55);
    border: 1px solid #3c3c3c;
}

.msg-close {
    position: absolute;
    right: 14px;
    top: 8px;
}

.msgbox h2 {
    font-size: 15px;
    font-weight: 600;
    line-height: 18px;
    color: #4fae7a;
}

.msg-body {
    display: flex;
    gap: 10px;
    margin-top: 19px;
}

.msg-body svg { margin-top: 3px; }

.msg-body p {
    font-size: 9.4px;
    line-height: 13.3px;
    color: #e6e6e6;
    white-space: nowrap;
}

.msg-actions {
    display: flex;
    justify-content: flex-end;
    margin-top: 23px;
}

.msg-ok {
    width: 53px;
    height: 20px;
    border: 1px solid #e5e5e5;
    border-radius: 2px;
    background: #58b580;
    color: #16361f;
    font-size: 10px;
    line-height: 18px;
    text-align: center;
}

.pointer {
    position: absolute;
    left: 107px;
    top: 92px;
}
```
